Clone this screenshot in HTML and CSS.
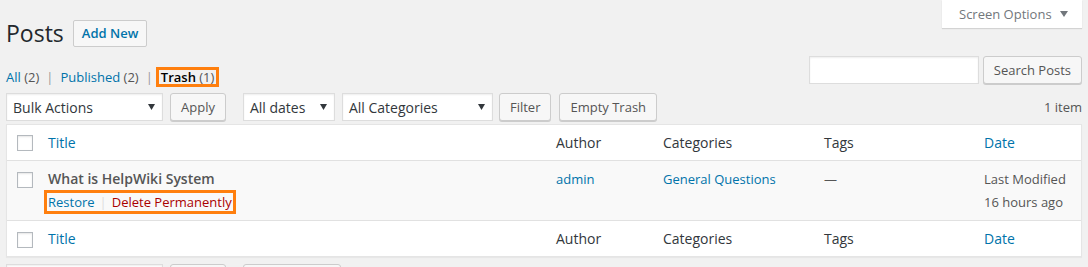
FILE: index.html
```html
<!DOCTYPE html>
<html lang="en">
<head>
  <meta charset="UTF-8" />
  <title>Posts - Trash</title>
  <link rel="stylesheet" href="styles.css">
</head>
<body>
  <div class="screen-meta-links">
    <button class="screen-options">Screen Options
      <svg width="8" height="6" viewBox="0 0 8 6"><path d="M0 0h8L4 6z" fill="#72777c"/></svg>
    </button>
  </div>

  <div class="wrap">
    <div class="heading">
      <h1>Posts</h1>
      <a class="add-new" href="#">Add New</a>
    </div>

    <div class="filters">
      <ul class="subsubsub">
        <li><a href="#">All <span class="count">(2)</span></a><span class="sep">|</span></li>
        <li><a href="#">Published <span class="count">(2)</span></a><span class="sep">|</span></li>
        <li><span class="current">Trash <span class="count">(1)</span></span></li>
      </ul>
      <div class="search-box">
        <input class="search-input" type="search">
        <button class="button">Search Posts</button>
      </div>
    </div>

    <div class="tablenav">
      <div class="select bulk">Bulk Actions <svg width="7" height="6" viewBox="0 0 7 6"><path d="M0 0h7L3.5 6z" fill="#32373c"/></svg></div>
      <button class="button apply">Apply</button>
      <div class="select dates">All dates <svg width="7" height="6" viewBox="0 0 7 6"><path d="M0 0h7L3.5 6z" fill="#32373c"/></svg></div>
      <div class="select cats">All Categories <svg width="7" height="6" viewBox="0 0 7 6"><path d="M0 0h7L3.5 6z" fill="#32373c"/></svg></div>
      <button class="button filter">Filter</button>
      <button class="button">Empty Trash</button>
      <div class="displaying-num">1 item</div>
    </div>

    <table class="posts">
      <colgroup>
        <col class="col-cb">
        <col>
        <col class="col-author">
        <col class="col-cats">
        <col class="col-tags">
        <col class="col-date">
      </colgroup>
      <thead>
        <tr>
          <th class="cb"><span class="checkbox"></span></th>
          <th><a href="#">Title</a></th>
          <th>Author</th>
          <th>Categories</th>
          <th>Tags</th>
          <th><a href="#">Date</a></th>
        </tr>
      </thead>
      <tbody>
        <tr>
          <td class="cb"><span class="checkbox"></span></td>
          <td>
            <strong class="post-title">What is HelpWiki System</strong>
            <div class="row-actions"><a href="#">Restore</a><span class="sep">|</span><a class="delete" href="#">Delete Permanently</a></div>
          </td>
          <td><a href="#">admin</a></td>
          <td><a href="#">General Questions</a></td>
          <td>—</td>
          <td class="date">Last Modified<br>16 hours ago</td>
        </tr>
      </tbody>
      <tfoot>
        <tr>
          <th class="cb"><span class="checkbox"></span></th>
          <th><a href="#">Title</a></th>
          <th>Author</th>
          <th>Categories</th>
          <th>Tags</th>
          <th><a href="#">Date</a></th>
        </tr>
      </tfoot>
    </table>

    <div class="tablenav bottom">
      <div class="select bulk">Bulk Actions <svg width="7" height="6" viewBox="0 0 7 6"><path d="M0 0h7L3.5 6z" fill="#32373c"/></svg></div>
      <button class="button apply">Apply</button>
      <button class="button">Empty Trash</button>
    </div>
  </div>
</body>
</html>
```

FILE: styles.css
```css
body {
  margin: 0;
  background: #f1f1f1;
  font-family: "Open Sans", sans-serif;
  font-size: 13px;
  color: #444;
}
a {
  color: #0073aa;
  text-decoration: none;
}
.screen-meta-links {
  float: right;
  margin-right: 6px;
}
.screen-options {
  display: flex;
  align-items: center;
  gap: 8px;
  width: 140px;
  height: 28px;
  padding: 0 0 0 17px;
  border: none;
  background: #fff;
  box-shadow: 0 1px 1px rgba(0, 0, 0, .12);
  color: #72777c;
  font: 13px "Open Sans", sans-serif;
  white-space: nowrap;
}
.wrap {
  margin: 0 6px;
  padding-top: 10px;
}
.heading {
  display: flex;
  align-items: center;
  gap: 9px;
  padding-top: 9px;
}
h1 {
  margin: 0;
  font-size: 23px;
  font-weight: 400;
  line-height: 29px;
  color: #23282d;
}
.add-new {
  height: 27px;
  box-sizing: border-box;
  padding: 0 8px;
  border: 1px solid #ccc;
  border-radius: 2px;
  background: #f7f7f7;
  font-weight: 600;
  line-height: 25px;
}
.filters {
  display: flex;
  justify-content: space-between;
  align-items: flex-start;
  margin-top: 8px;
}
.subsubsub {
  display: flex;
  margin: 8px 0 0;
  padding: 0;
  list-style: none;
  line-height: 26px;
  color: #555;
}
.subsubsub .count {
  color: #555;
}
.subsubsub .sep {
  margin: 0 7px 0 7px;
  color: #999;
}
.current {
  display: inline-block;
  margin-left: -4px;
  padding: 0 2px 0 2px;
  border: 3px solid #ff7f0e;
  line-height: 14px;
  color: #000;
  font-weight: 600;
}
.current .count {
  font-weight: 400;
}
.search-box {
  display: flex;
  gap: 4px;
}
.search-input {
  width: 170px;
  height: 28px;
  box-sizing: border-box;
  border: 1px solid #ddd;
  background: #fff;
  box-shadow: inset 0 1px 2px rgba(0, 0, 0, .07);
}
.button {
  height: 28px;
  box-sizing: border-box;
  padding: 0 10px;
  border: 1px solid #ccc;
  border-radius: 3px;
  background: #f7f7f7;
  box-shadow: 0 1px 0 #ccc;
  color: #555;
  font: 13px/26px "Open Sans", sans-serif;
}
.tablenav {
  display: flex;
  align-items: center;
  height: 30px;
  margin: 2px 0;
}
.select {
  display: flex;
  align-items: center;
  justify-content: space-between;
  height: 28px;
  box-sizing: border-box;
  padding: 0 7px 0 6px;
  border: 1px solid #ddd;
  background: #fff;
  box-shadow: inset 0 1px 2px rgba(0, 0, 0, .07);
  color: #32373c;
  font-size: 14px;
}
.bulk {
  width: 157px;
  margin-right: 7px;
}
.apply {
  margin-right: 17px;
}
.dates {
  width: 92px;
  margin-right: 7px;
}
.cats {
  width: 151px;
  margin-right: 6px;
}
.filter {
  margin-right: 8px;
}
.displaying-num {
  margin-left: auto;
  color: #555;
}
.posts {
  width: 100%;
  table-layout: fixed;
  border-collapse: separate;
  border-spacing: 0;
  border: 1px solid #e5e5e5;
  background: #fff;
  box-shadow: 0 1px 1px rgba(0, 0, 0, .04);
}
.col-cb {
  width: 31px;
}
.col-author,
.col-date {
  width: 107px;
}
.col-cats {
  width: 161px;
}
.col-tags {
  width: 160px;
}
th,
td {
  padding: 8px 10px;
  text-align: left;
  vertical-align: top;
}
th {
  font-size: 14px;
  font-weight: 400;
  line-height: 19px;
  color: #32373c;
}
thead th {
  border-bottom: 1px solid #e1e1e1;
}
tfoot th {
  border-top: 1px solid #e1e1e1;
}
tbody tr {
  background: #f9f9f9;
}
tbody td {
  padding-bottom: 6px;
  line-height: 20px;
  color: #555;
}
.cb,
tbody .cb {
  padding: 11px 0 0 10px;
}
thead .cb {
  padding-top: 10px;
}
.checkbox {
  display: block;
  width: 16px;
  height: 16px;
  box-sizing: border-box;
  border: 1px solid #b4b9be;
  background: #fff;
  box-shadow: inset 0 1px 2px rgba(0, 0, 0, .1);
}
.post-title {
  display: block;
  font-size: 14px;
  font-weight: 600;
  color: #555;
}
.row-actions {
  display: inline-block;
  margin: 1px 0 0 -4px;
  padding: 0 1px;
  border: 3px solid #ff7f0e;
  line-height: 18px;
}
.row-actions .sep {
  margin: 0 5px;
  color: #ddd;
}
.row-actions .delete {
  color: #a00;
}
td.date {
  padding-top: 7px;
  line-height: 23px;
}
.tablenav.bottom {
  margin-top: 6px;
}
```
